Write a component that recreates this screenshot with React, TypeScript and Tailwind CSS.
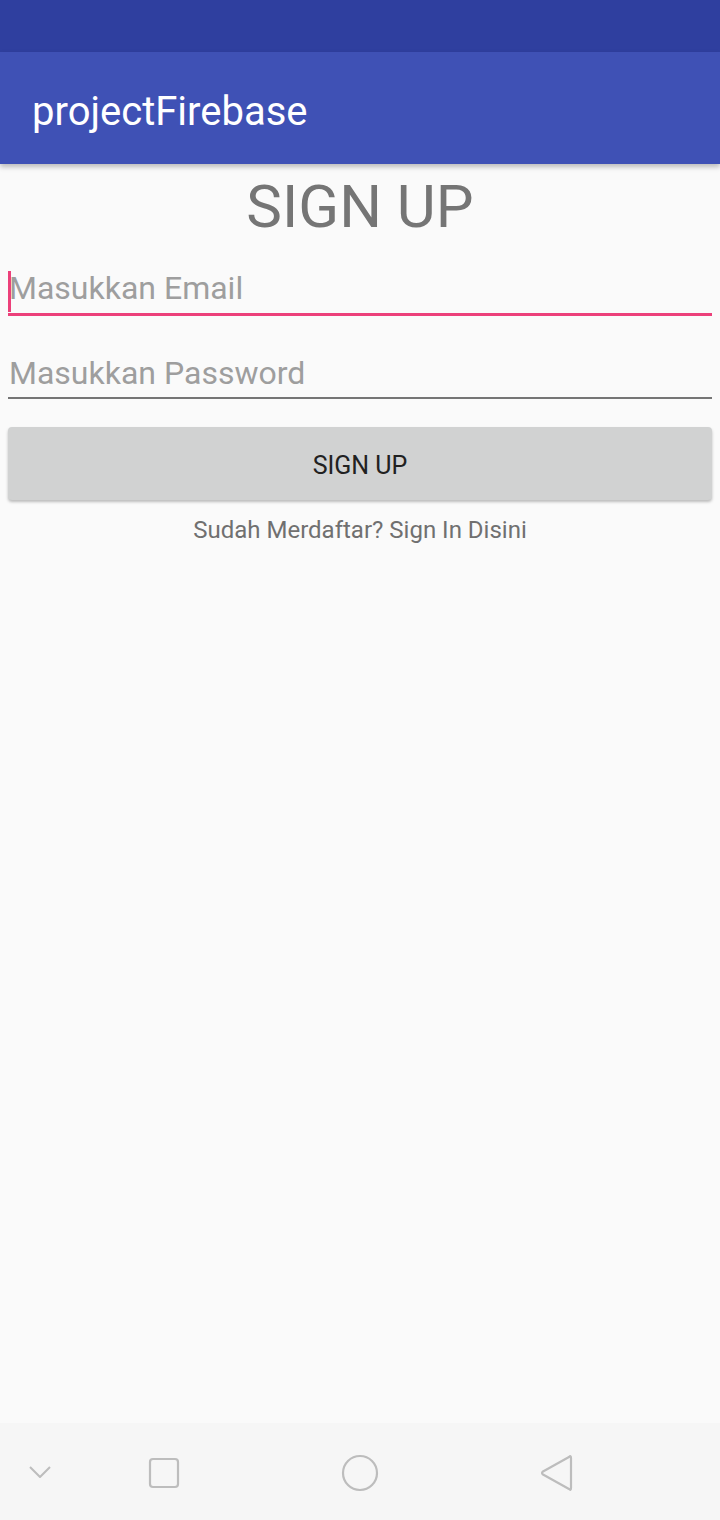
import React from 'react';

const NavBar: React.FC = () => (
  <div className="h-[97px] bg-[#f6f6f6] relative flex items-center">
    <svg className="absolute left-[28px] top-[41px]" width="24" height="16" viewBox="0 0 24 16" fill="none">
      <path d="M2 3 L12 13 L22 3" stroke="#bdbdbd" strokeWidth="2" strokeLinejoin="round" />
    </svg>
    <svg className="absolute left-[147px] top-[34px]" width="34" height="32" viewBox="0 0 34 32" fill="none">
      <rect x="3" y="2" width="28" height="28" rx="3" stroke="#bdbdbd" strokeWidth="2.2" />
    </svg>
    <svg className="absolute left-[340px] top-[30px]" width="40" height="40" viewBox="0 0 40 40" fill="none">
      <circle cx="20" cy="20" r="17" stroke="#bdbdbd" strokeWidth="2.2" />
    </svg>
    <svg className="absolute left-[538px] top-[30px]" width="36" height="40" viewBox="0 0 36 40" fill="none">
      <path d="M31 4 Q33 2 33 5 L33 35 Q33 38 31 36 L5 21.5 Q3 20 5 18.5 Z" stroke="#bdbdbd" strokeWidth="2.2" strokeLinejoin="round" />
    </svg>
  </div>
);

const App: React.FC = () => {
  return (
    <div
      className="w-[720px] h-[1520px] flex flex-col bg-[#fafafa]"
      style={{ fontFamily: 'Roboto, "Noto Sans", sans-serif' }}
    >
      <div className="h-[52px] bg-[#2f3f9f]" />
      <div className="h-[112px] bg-[#3f51b5] flex items-center px-[32px] pt-[8px] shadow-[0_3px_5px_rgba(0,0,0,0.25)] relative z-10">
        <span className="text-white text-[40px] leading-none">projectFirebase</span>
      </div>

      <div className="flex-1 flex flex-col px-[8px]">
        <h1 className="text-center text-[#757575] text-[60px] leading-[70px] mt-[8px]">SIGN UP</h1>

        <div className="mt-[23px] relative h-[48px] flex items-end">
          <div className="absolute left-0 top-[6px] w-[3px] h-[41px] bg-[#ec407a]" />
          <span className="text-[32px] leading-[40px] text-[#9e9e9e] pl-[1px] pb-[5px]">Masukkan Email</span>
        </div>
        <div className="h-[3px] bg-[#ec407a]" />

        <div className="mt-[36px] h-[45px] flex items-end">
          <span className="text-[32px] leading-[40px] text-[#9e9e9e] pl-[1px] pb-[4px]">Masukkan Password</span>
        </div>
        <div className="h-[2px] bg-[#757575]" />

        <div className="mt-[28px] h-[73px] rounded-[4px] bg-[#d1d2d2] shadow-[0_2px_3px_rgba(0,0,0,0.25)] flex items-center justify-center pt-[4px]">
          <span className="text-[25px] text-[#212121]">SIGN UP</span>
        </div>

        <p className="text-center text-[24px] text-[#707070] mt-[12px]">Sudah Merdaftar? Sign In Disini</p>
      </div>

      <NavBar />
    </div>
  );
};

export default App;
